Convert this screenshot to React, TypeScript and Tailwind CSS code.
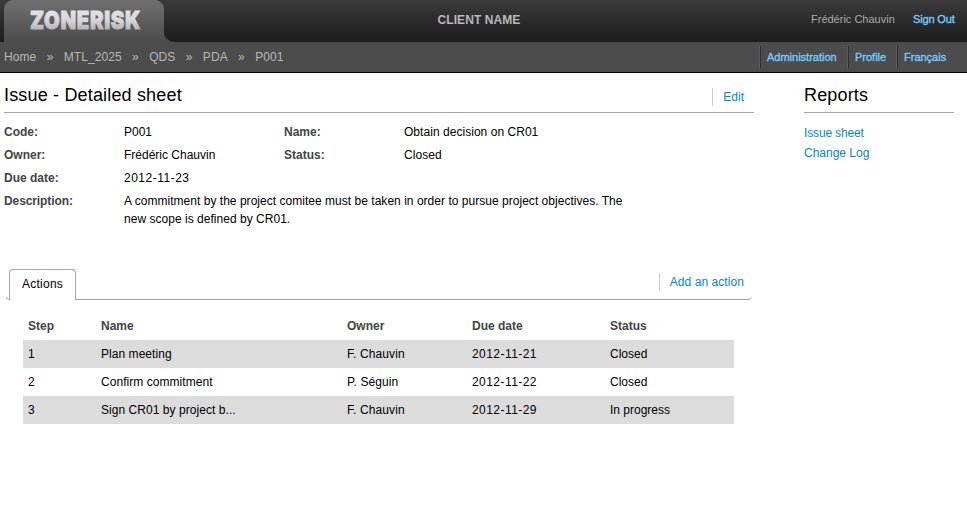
import type { ReactNode } from "react";

const fields: [string, string, string?, string?][] = [
  ["Code:", "P001", "Name:", "Obtain decision on CR01"],
  ["Owner:", "Frédéric Chauvin", "Status:", "Closed"],
  ["Due date:", "2012-11-23"],
];

const actions = [
  ["1", "Plan meeting", "F. Chauvin", "2012-11-21", "Closed"],
  ["2", "Confirm commitment", "P. Séguin", "2012-11-22", "Closed"],
  ["3", "Sign CR01 by project b...", "F. Chauvin", "2012-11-29", "In progress"],
];

const columnTracking = ["", "tracking-[0.05px]", "tracking-[0.1px]", "tracking-[0.45px]", ""];

const crumbs = ["Home", "MTL_2025", "QDS", "PDA", "P001"];

function Logo() {
  return (
    <svg className="ml-[21px] block" width="120" height="42" viewBox="0 0 120 42">
      <defs>
        <linearGradient id="metal" gradientUnits="userSpaceOnUse" x1="0" y1="11" x2="0" y2="30">
          <stop offset="0" stopColor="#e4e2e6" />
          <stop offset="0.5" stopColor="#d8d5dc" />
          <stop offset="1" stopColor="#b4b2b8" />
        </linearGradient>
      </defs>
      <text
        transform="scale(0.83 1)"
        x="6"
        y="29.2"
        textLength="133"
        lengthAdjust="spacing"
        fontFamily="Inter, 'Liberation Sans', sans-serif"
        fontWeight="900"
        fontSize="24.5"
        fill="url(#metal)"
        stroke="url(#metal)"
        strokeWidth="0.9"
      >
        ZONERISK
      </text>
    </svg>
  );
}

function NavLink({ children, className }: { children: ReactNode; className: string }) {
  return (
    <a className={`block h-[22px] border-l border-[#303030] pl-[6px] leading-[23px] shadow-[-1px_0_0_#5c5c5c] ${className}`}>
      {children}
    </a>
  );
}

export default function App() {
  return (
    <div className="h-[506px] w-[967px] overflow-hidden bg-white font-['Liberation_Sans',Arial,sans-serif] text-[12px] leading-[18px] text-black">
      <header className="flex h-[42px] bg-gradient-to-b from-[#3b3b3b] to-[#1c1c1c] pl-1">
        <div className="relative h-[42px] w-40 rounded-t-[9px] bg-gradient-to-b from-[#707070] to-[#4c4c4c]">
          <Logo />
          <svg className="absolute bottom-0 left-40" width="10" height="10">
            <path d="M0 0A10 10 0 0 0 10 10H0Z" fill="#4c4c4c" />
          </svg>
        </div>
        <div className="w-[630px] pt-[11px] text-center font-bold tracking-[0.08px] text-[#b8b8b8]">CLIENT NAME</div>
        <div className="flex pt-[10px] text-[11px]">
          <span className="ml-[17px] w-[102px] text-[#aaa]">Frédéric Chauvin</span>
          <a className="tracking-[-0.15px] text-[#74cbfb] [-webkit-text-stroke:0.35px_#74cbfb]">Sign Out</a>
        </div>
      </header>

      <nav className="flex h-[31px] justify-between border-b border-black bg-[#4c4c4c] pl-1">
        <div className="flex pt-[6px] tracking-[0.06px] text-[#b8b8b8]">
          {crumbs.map((c, i) => (
            <span key={c} className="flex">
              {i > 0 && <span className="mx-[10.4px]">»</span>}
              {c}
            </span>
          ))}
        </div>
        <div className="flex pt-1 text-[11px] text-[#74cbfb] [-webkit-text-stroke:0.35px_#74cbfb]">
          <NavLink className="w-[88px]">Administration</NavLink>
          <NavLink className="w-[49px]">Profile</NavLink>
          <NavLink className="w-[70px]">Français</NavLink>
        </div>
      </nav>

      <div className="flex gap-[50px] pl-1">
        <main className="w-[750px]">
          <div className="flex h-10 justify-between border-b border-[#a6a6a6]">
            <h1 className="pt-[10px] text-[18px] leading-6 tracking-[0.17px]">Issue - Detailed sheet</h1>
            <a className="mt-[15px] h-[18px] border-l border-[#ccc] pl-[10px] pr-[10px] text-[#0088cc]">Edit</a>
          </div>

          <dl className="flex flex-col gap-[5px] pt-[10px]">
            {fields.map(([a, b, c, d]) => (
              <div key={a} className="flex">
                <dt className="w-[120px] font-bold text-[#444]">{a}</dt>
                <dd className={a === "Due date:" ? "w-40 tracking-[0.5px]" : "w-40"}>{b}</dd>
                <dt className="w-[120px] font-bold text-[#444]">{c}</dt>
                <dd className="tracking-[0.04px]">{d}</dd>
              </div>
            ))}
            <div className="flex">
              <dt className="w-[120px] font-bold tracking-[-0.1px] text-[#444]">Description:</dt>
              <dd className="whitespace-nowrap tracking-[0.027px]">
                A commitment by the project comitee must be taken in order to pursue project objectives. The
                <br />
                new scope is defined by CR01.
              </dd>
            </div>
          </dl>

          <section className="mt-[41px]">
            <div className="flex h-[31px] items-end pl-[2px]">
              <span className="h-[3px] w-[3px] rounded-bl-[3px] border-b border-l border-[#bbb]" />
              <div className="h-[31px] w-[67px] rounded-t-[4px] border-x border-t border-[#a6a6a6] pl-3 pt-[5px] tracking-[0.25px]">
                Actions
              </div>
              <div className="flex h-[31px] w-[676px] justify-end rounded-br-[4px] border-b border-[#a6a6a6]">
                <a className="mt-1 h-[18px] border-l border-[#ccc] pl-[10px] pr-2 tracking-[0.07px] text-[#0088cc]">Add an action</a>
              </div>
            </div>
            <table className="ml-[19px] mt-3 w-[711px] table-fixed text-left">
              <colgroup>
                <col className="w-[73px]" />
                <col className="w-[246px]" />
                <col className="w-[125px]" />
                <col className="w-[138px]" />
                <col />
              </colgroup>
              <thead>
                <tr className="h-7 text-[#444]">
                  {["Step", "Name", "Owner", "Due date", "Status"].map((h) => (
                    <th key={h} className="p-0 pl-[5px]">{h}</th>
                  ))}
                </tr>
              </thead>
              <tbody>
                {actions.map((r) => (
                  <tr key={r[0]} className="h-7 odd:bg-[#dcdcdc]">
                    {r.map((v, i) => (
                      <td key={i} className={`p-0 pl-[5px] ${columnTracking[i]}`}>{v}</td>
                    ))}
                  </tr>
                ))}
              </tbody>
            </table>
          </section>
        </main>

        <aside className="w-[150px]">
          <h2 className="h-10 border-b border-[#a6a6a6] pt-[10px] text-[18px] leading-6 tracking-[0.15px]">Reports</h2>
          <div className="flex flex-col gap-[2px] pt-[11px] text-[#0088cc]">
            <a className="tracking-[-0.15px]">Issue sheet</a>
            <a>Change Log</a>
          </div>
        </aside>
      </div>
    </div>
  );
}
